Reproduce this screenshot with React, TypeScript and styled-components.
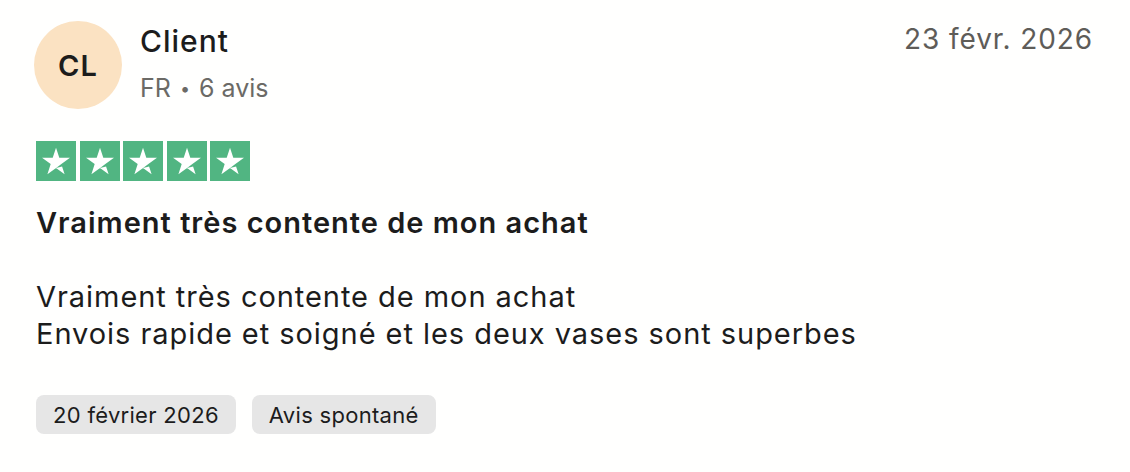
import React from 'react';
import styled, { createGlobalStyle } from 'styled-components';

const GlobalStyle = createGlobalStyle`
  html, body {
    margin: 0;
    padding: 0;
    background: #ffffff;
  }
  body {
    font-family: Inter, "Noto Sans", "Liberation Sans", sans-serif;
    color: #1c1c1c;
    -webkit-font-smoothing: antialiased;
  }
`;

const Card = styled.article`
  width: 1130px;
  height: 472px;
  box-sizing: border-box;
  padding: 21px 37px 0 36px;
  background: #fffffe;
`;

const Header = styled.div`
  display: flex;
  align-items: flex-start;
  justify-content: space-between;
`;

const Consumer = styled.div`
  display: flex;
  align-items: flex-start;
  gap: 18px;
  margin-left: -2px;
`;

const Avatar = styled.div`
  width: 88px;
  height: 88px;
  border-radius: 50%;
  background: #fbe2c2;
  display: flex;
  align-items: center;
  justify-content: center;
  font-size: 29px;
  font-weight: 600;
  letter-spacing: 1px;
  color: #1c1c1c;
`;

const ConsumerInfo = styled.div`
  display: flex;
  flex-direction: column;
`;

const Name = styled.span`
  font-size: 30px;
  line-height: 40px;
  font-weight: 500;
  letter-spacing: 1px;
  color: #1c1c1c;
`;

const Meta = styled.span`
  margin-top: 10px;
  font-size: 25px;
  line-height: 34px;
  color: #6b6a66;
`;

const Dot = styled.span`
  font-size: 18px;
  vertical-align: 2px;
  margin: 0 2px;
`;

const ReviewDate = styled.time`
  font-size: 28px;
  line-height: 36px;
  color: #5e5c58;
  letter-spacing: 0.9px;
`;

const Stars = styled.div`
  display: flex;
  gap: 3.5px;
  margin-top: 32px;
`;

const StarBox = styled.div<{ $filled: boolean }>`
  width: 40px;
  height: 40px;
  background: ${p => (p.$filled ? '#51b582' : '#dcdce6')};
  display: flex;
  align-items: center;
  justify-content: center;
`;

const Title = styled.h2`
  margin: 24px 0 0 0;
  font-size: 29px;
  line-height: 36px;
  font-weight: 600;
  letter-spacing: 1px;
  color: #1c1c1c;
`;

const Body = styled.p`
  margin: 37px 0 0 0;
  font-size: 29px;
  line-height: 37px;
  font-weight: 400;
  letter-spacing: 0.95px;
  color: #1c1c1c;
`;

const Tags = styled.div`
  display: flex;
  gap: 16px;
  margin-top: 43px;
`;

const Tag = styled.span`
  display: inline-flex;
  align-items: center;
  height: 39px;
  padding: 0 17px;
  border-radius: 8px;
  background: #e6e6e6;
  font-size: 22px;
  letter-spacing: 0.3px;
  color: #1c1c1c;
`;

const Star = () => (
  <svg width="40" height="40" viewBox="0 0 96 96" aria-hidden="true">
    <path
      fill="#fff"
      d="M48.03 64.7L62.6 61l6.09 18.76L48.03 64.7zM81.56 40.44H55.91L48.03 16.29l-7.88 24.15H14.5l20.76 14.96-7.88 24.16 20.76-14.96 12.77-9.2 20.65-14.96z"
    />
  </svg>
);

const reviewLines = [
  'Vraiment très contente de mon achat',
  'Envois rapide et soigné et les deux vases sont superbes',
];

export default function App() {
  const rating = 5;
  return (
    <>
      <GlobalStyle />
      <Card>
        <Header>
          <Consumer>
            <Avatar>CL</Avatar>
            <ConsumerInfo>
              <Name>Client</Name>
              <Meta>
                FR <Dot>•</Dot> 6 avis
              </Meta>
            </ConsumerInfo>
          </Consumer>
          <ReviewDate dateTime="2026-02-23">23 févr. 2026</ReviewDate>
        </Header>

        <Stars aria-label={`Noté ${rating} sur 5 étoiles`}>
          {[1, 2, 3, 4, 5].map(i => (
            <StarBox key={i} $filled={i <= rating}>
              <Star />
            </StarBox>
          ))}
        </Stars>

        <Title>Vraiment très contente de mon achat</Title>

        <Body>
          {reviewLines.map((line, i) => (
            <React.Fragment key={i}>
              {line}
              {i < reviewLines.length - 1 && <br />}
            </React.Fragment>
          ))}
        </Body>

        <Tags>
          <Tag>20 février 2026</Tag>
          <Tag>Avis spontané</Tag>
        </Tags>
      </Card>
    </>
  );
}
